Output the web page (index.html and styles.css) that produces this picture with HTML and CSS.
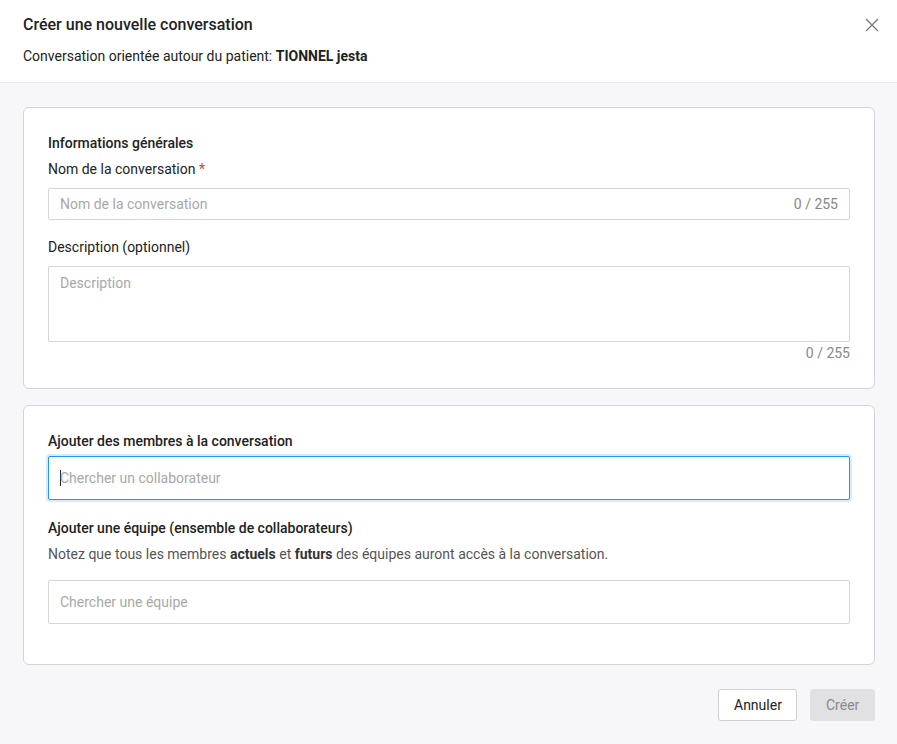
FILE: index.html
```html
<!DOCTYPE html>
<html lang="fr">
<head>
<meta charset="utf-8">
<link rel="stylesheet" href="styles.css">
</head>
<body>
<div class="dialog">
  <header class="head">
    <div class="head-text">
      <h1 class="title">Créer une nouvelle conversation</h1>
      <p class="subtitle">Conversation orientée autour du patient: <b>TIONNEL jesta</b></p>
    </div>
    <button class="close" aria-label="Fermer">
      <svg width="14" height="14" viewBox="0 0 14 14"><path d="M1 1L13 13M13 1L1 13" stroke="#777" stroke-width="1.3" fill="none"/></svg>
    </button>
  </header>
  <main class="body">
    <section class="card card-info">
      <div class="section-title">Informations générales</div>
      <label class="label">Nom de la conversation <span class="req">*</span></label>
      <div class="input input-sm">
        <span class="ph">Nom de la conversation</span>
        <span class="count">0 / 255</span>
      </div>
      <label class="label label-gap">Description (optionnel)</label>
      <div class="textarea"><span class="ph">Description</span></div>
      <div class="count-below">0 / 255</div>
    </section>
    <section class="card card-members">
      <div class="section-title">Ajouter des membres à la conversation</div>
      <div class="input input-lg focused"><span class="caret"></span><span class="ph">Chercher un collaborateur</span></div>
      <div class="section-title team-title">Ajouter une équipe (ensemble de collaborateurs)</div>
      <p class="note">Notez que tous les membres <b>actuels</b> et <b>futurs</b> des équipes auront accès à la conversation.</p>
      <div class="input input-lg"><span class="ph">Chercher une équipe</span></div>
    </section>
    <div class="actions">
      <button class="btn btn-cancel">Annuler</button>
      <button class="btn btn-create" disabled>Créer</button>
    </div>
  </main>
</div>
</body>
</html>
```
FILE: styles.css
```css
* { box-sizing: border-box; }
html, body { margin: 0; padding: 0; }
body {
  font-family: Roboto, "Liberation Sans", Arial, sans-serif;
  color: #212121;
  background: #f7f6f9;
  width: 897px;
  height: 744px;
  overflow: hidden;
}
.dialog { display: flex; flex-direction: column; height: 744px; }
.head {
  background: #fff;
  border-bottom: 1px solid #ebebeb;
  display: flex;
  justify-content: space-between;
  padding: 13px 17px 16px 23px;
}
.title { margin: 0; font-size: 16px; line-height: 24px; font-weight: 500; color: #222; }
.subtitle { margin: 9px 0 0; font-size: 14px; line-height: 20px; color: #222; }
.subtitle b { font-weight: 700; }
.close {
  border: 0; background: none; padding: 0; width: 16px; height: 16px;
  margin-top: 4px; display: flex; align-items: center; justify-content: center; cursor: pointer;
}
.body { flex: 1; padding: 24px 22px 0 23px; display: flex; flex-direction: column; }
.card {
  background: #fff;
  border: 1px solid #d4d4d6;
  border-radius: 6px;
  padding: 25px 24px 26px 24px;
}
.card-members { margin-top: 16px; padding-bottom: 40px; }
.section-title { font-size: 14px; line-height: 20px; font-weight: 500; color: #222; }
.label { display: block; font-size: 14px; line-height: 20px; color: #222; margin-top: 6px; }
.label-gap { margin-top: 17px; }
.team-title { margin-top: 18px; }
.req { color: #e53935; }
.input {
  display: flex; align-items: center; justify-content: space-between;
  border: 1px solid #d6d6d6; border-radius: 2px; background: #fff;
  padding: 0 11px; font-size: 14px;
}
.input-sm { height: 32px; margin-top: 9px; }
.input-lg { height: 44px; }
.card-members .section-title + .input { margin-top: 5px; }
.focused {
  border: 1px solid #2196f3;
  box-shadow: 0 0 0 2px #d9ecfb;
  justify-content: flex-start;
}
.caret { width: 1px; height: 16px; background: #222; margin-right: -1px; }
.ph { color: #a8a8a8; font-size: 14px; }
.count { color: #888; font-size: 14px; }
.textarea {
  height: 76px; margin-top: 9px; border: 1px solid #d6d6d6; border-radius: 2px;
  padding: 7px 11px; font-size: 14px; line-height: 18px;
}
.count-below { text-align: right; color: #888; font-size: 14px; line-height: 18px; margin-top: 2px; }
.note { margin: 6px 0 16px; font-size: 14px; line-height: 20px; color: #555; }
.note b { color: #333; font-weight: 700; }
.actions { display: flex; justify-content: flex-end; gap: 13px; margin-top: 24px; }
.btn {
  height: 32px; font-family: inherit; font-size: 14px; border-radius: 3px; padding: 0 15px;
}
.btn-cancel { background: #fff; border: 1px solid #cfcfcf; color: #222; width: 79px; }
.btn-create { background: #e1e0e3; border: 1px solid #e1e0e3; color: #8a8a8a; width: 65px; }
```
